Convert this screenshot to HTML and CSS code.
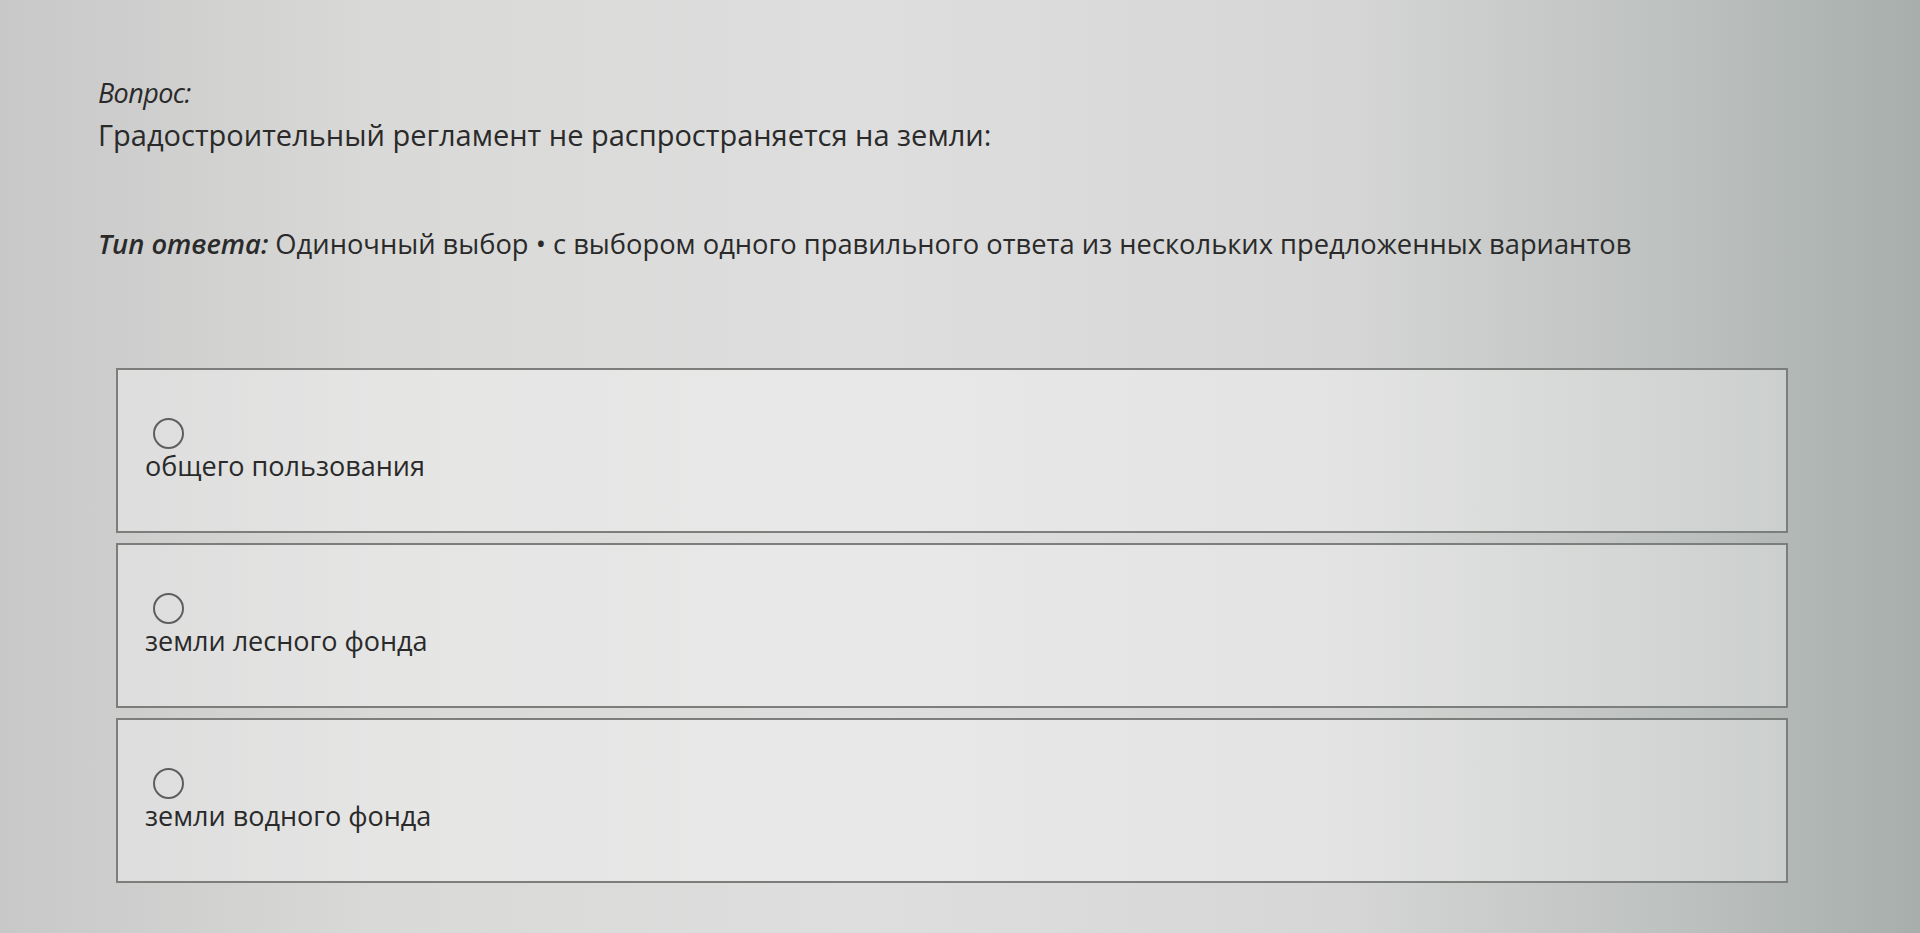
FILE: index.html
```html
<!DOCTYPE html>
<html lang="ru">
<head>
<meta charset="utf-8">
<title>Вопрос</title>
<link rel="stylesheet" href="styles.css">
</head>
<body>
<main class="page">
  <div class="q-label">Вопрос:</div>
  <div class="q-text">Градостроительный регламент не распространяется на земли:</div>
  <div class="q-type"><span class="q-type-label">Тип ответа:</span> Одиночный выбор • с выбором одного правильного ответа из нескольких предложенных вариантов</div>
  <div class="options">
    <div class="option">
      <span class="radio"></span>
      <span class="option-text">общего пользования</span>
    </div>
    <div class="option">
      <span class="radio"></span>
      <span class="option-text">земли лесного фонда</span>
    </div>
    <div class="option">
      <span class="radio"></span>
      <span class="option-text">земли водного фонда</span>
    </div>
  </div>
</main>
</body>
</html>
```

FILE: styles.css
```css
html, body {
  margin: 0;
  height: 100%;
}
body {
  background: linear-gradient(90deg, #c8c8c8 0%, #d9d9d8 20%, #dedede 45%, #d5d6d5 70%, #bcc0be 88%, #a7aeab 100%);
  font-family: "Open Sans", "Noto Sans", sans-serif;
  color: #2a2a2a;
  overflow: hidden;
}
.page {
  padding: 76px 0 0 98px;
  display: flex;
  flex-direction: column;
}
.q-label {
  font-style: italic;
  font-size: 27px;
  line-height: 34px;
  letter-spacing: -0.6px;
}
.q-text {
  font-size: 29px;
  line-height: 38px;
  margin-top: 6px;
}
.q-type {
  margin-top: 72px;
  font-size: 27.3px;
  line-height: 36px;
}
.q-type-label {
  font-style: italic;
  font-weight: 600;
}
.options {
  margin-top: 106px;
  margin-left: 18px;
  width: 1672px;
  display: flex;
  flex-direction: column;
  gap: 10px;
}
.option {
  height: 165px;
  box-sizing: border-box;
  border: 2px solid #7c7e7c;
  background: rgba(255, 255, 255, 0.32);
  padding: 48px 0 0 27px;
  display: flex;
  flex-direction: column;
  align-items: flex-start;
}
.radio {
  width: 31px;
  height: 31px;
  box-sizing: border-box;
  border: 2px solid #5e5e5e;
  border-radius: 50%;
  margin-left: 8px;
}
.option-text {
  font-size: 27px;
  line-height: 34px;
  margin-top: 0;
}
```
